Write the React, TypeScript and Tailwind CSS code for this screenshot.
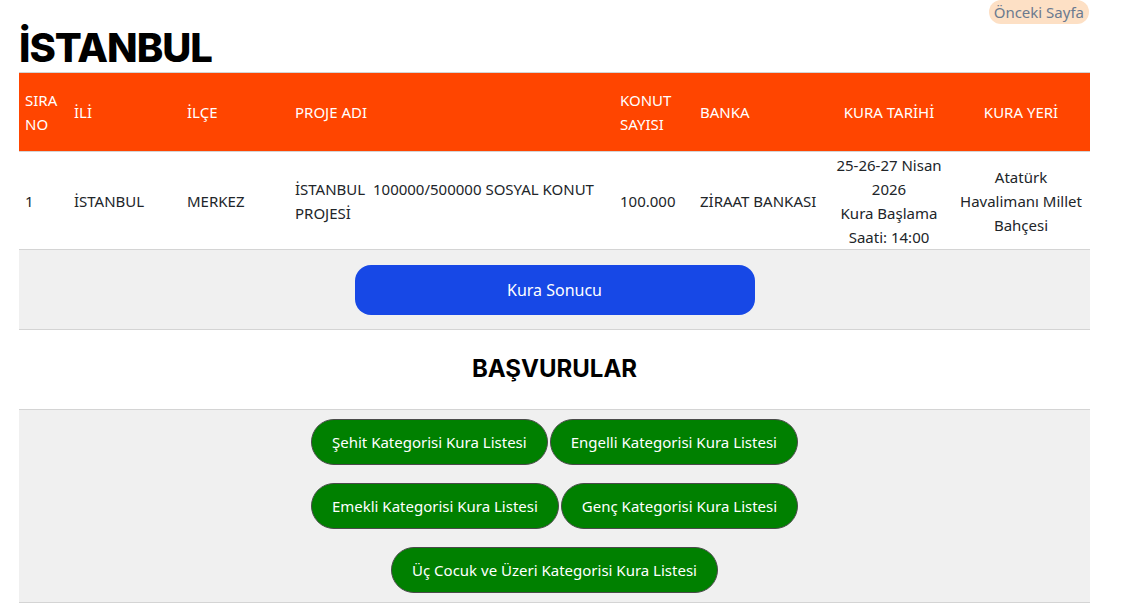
import React from 'react';

const categories = [
  ['Şehit Kategorisi Kura Listesi', 'Engelli Kategorisi Kura Listesi'],
  ['Emekli Kategorisi Kura Listesi', 'Genç Kategorisi Kura Listesi'],
  ['Üç Cocuk ve Üzeri Kategorisi Kura Listesi'],
];

export default function App() {
  return (
    <div className="min-h-screen bg-white text-[#212529] font-['Noto_Sans',sans-serif]">
      <div className="w-[1071px] ml-[19px]">
        <div className="flex justify-end h-[24px]">
          <a className="px-[5px] h-[24px] leading-[24px] rounded-full bg-[#fde0c5] text-[#6b7a8f] text-[15px] mr-[1px]">
            Önceki Sayfa
          </a>
        </div>
        <h1 className="font-['Inter',sans-serif] font-extrabold text-[40px] leading-[48px] text-black tracking-[-1px]">İSTANBUL</h1>

        <table className="w-full table-fixed border-collapse text-[15px] leading-[24px]">
          <colgroup>
            <col className="w-[49px]" />
            <col className="w-[113px]" />
            <col className="w-[108px]" />
            <col className="w-[325px]" />
            <col className="w-[80px]" />
            <col className="w-[132px]" />
            <col className="w-[126px]" />
            <col className="w-[138px]" />
          </colgroup>
          <thead>
            <tr className="bg-[#ff4500] text-white border-t border-b border-[#d4d4d4]">
              <th className="px-[6px] py-[15px] h-[79px] text-left font-normal">SIRA NO</th>
              <th className="px-[6px] text-left font-normal">İLİ</th>
              <th className="px-[6px] text-left font-normal">İLÇE</th>
              <th className="px-[6px] text-left font-normal">PROJE ADI</th>
              <th className="px-[6px] text-left font-normal">KONUT SAYISI</th>
              <th className="px-[6px] text-left font-normal">BANKA</th>
              <th className="px-[6px] text-center font-normal">KURA TARİHİ</th>
              <th className="px-[6px] text-center font-normal">KURA YERİ</th>
            </tr>
          </thead>
          <tbody>
            <tr className="border-b border-[#d4d4d4]">
              <td className="px-[6px] h-[98px]">1</td>
              <td className="px-[6px]">İSTANBUL</td>
              <td className="px-[6px]">MERKEZ</td>
              <td className="px-[6px] whitespace-pre-wrap">{'İSTANBUL  100000/500000 SOSYAL KONUT PROJESİ'}</td>
              <td className="px-[6px]">100.000</td>
              <td className="px-[6px]">ZİRAAT BANKASI</td>
              <td className="px-[6px] text-center">
                25-26-27 Nisan 2026
                <br />
                Kura Başlama Saati: 14:00
              </td>
              <td className="px-[6px] text-center">Atatürk Havalimanı Millet Bahçesi</td>
            </tr>
            <tr className="bg-[#f0f0f0] border-b border-[#d4d4d4]">
              <td colSpan={8} className="h-[80px] py-0">
                <div className="flex justify-center">
                  <button className="w-[400px] h-[50px] rounded-[16px] bg-[#1748e6] text-white text-[16px]">
                    Kura Sonucu
                  </button>
                </div>
              </td>
            </tr>
          </tbody>
        </table>

        <h2 className="font-['Inter',sans-serif] font-bold text-[24px] text-black text-center h-[79px] leading-[78px]">
          BAŞVURULAR
        </h2>

        <div className="bg-[#f0f0f0] border-t border-b border-[#d4d4d4] pt-[9px] pb-[9px] flex flex-col items-center gap-[18px]">
          {categories.map((row, i) => (
            <div key={i} className="flex gap-[2px]">
              {row.map((c) => (
                <button
                  key={c}
                  className="h-[46px] px-[20px] rounded-full bg-[#008000] border border-[#4a4a4a] text-white text-[15px]"
                >
                  {c}
                </button>
              ))}
            </div>
          ))}
        </div>
      </div>
    </div>
  );
}
